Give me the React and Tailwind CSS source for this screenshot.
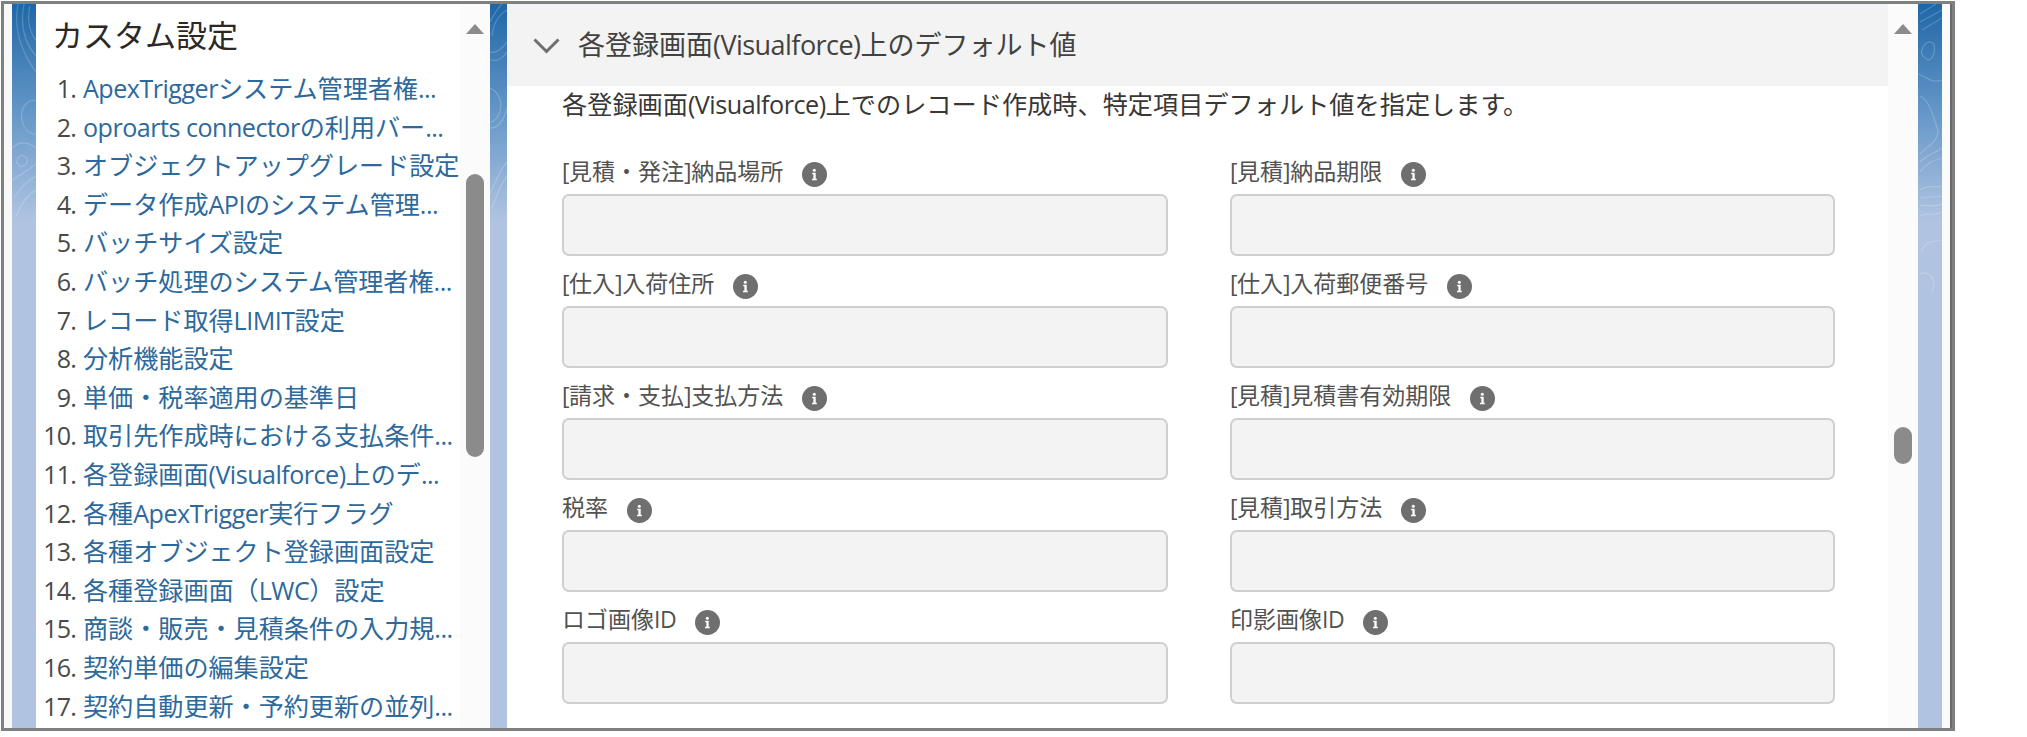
import React from 'react';

const menuItems = [
  'ApexTriggerシステム管理者権...',
  'oproarts connectorの利用バー...',
  'オブジェクトアップグレード設定',
  'データ作成APIのシステム管理...',
  'バッチサイズ設定',
  'バッチ処理のシステム管理者権...',
  'レコード取得LIMIT設定',
  '分析機能設定',
  '単価・税率適用の基準日',
  '取引先作成時における支払条件...',
  '各登録画面(Visualforce)上のデ...',
  '各種ApexTrigger実行フラグ',
  '各種オブジェクト登録画面設定',
  '各種登録画面（LWC）設定',
  '商談・販売・見積条件の入力規...',
  '契約単価の編集設定',
  '契約自動更新・予約更新の並列...',
];

const fields = [
  '[見積・発注]納品場所',
  '[見積]納品期限',
  '[仕入]入荷住所',
  '[仕入]入荷郵便番号',
  '[請求・支払]支払方法',
  '[見積]見積書有効期限',
  '税率',
  '[見積]取引方法',
  'ロゴ画像ID',
  '印影画像ID',
];

// Latin runs are set a little tighter than the Japanese around them
const MixedText = ({ children }) =>
  children.split(/([\x20-\x7e]+)/).map((part, i) =>
    i % 2 === 1 ? (
      <span key={i} className="tracking-[-0.02em]">{part}</span>
    ) : (
      part
    )
  );

const Contours = ({ className, paths }) => (
  <div className={`shrink-0 h-full bg-linear-to-b from-[#1c67a7] from-0% via-[#5f94c6] via-14% to-[#b0c4e1] to-30% ${className}`}>
    <svg width="24" height="320" viewBox="0 0 24 320" fill="none" stroke="#fff" strokeOpacity="0.2" strokeWidth="1.2">
      {paths.map((d) => (
        <path key={d} d={d} />
      ))}
    </svg>
  </div>
);

const ScrollArrow = () => (
  <svg width="18" height="10" viewBox="0 0 18 10" className="mt-5 shrink-0">
    <path d="M9 0L18 10H0Z" fill="#8b8b8b" />
  </svg>
);

const InfoIcon = () => (
  <svg width="25" height="25" viewBox="0 0 25 25" className="shrink-0">
    <circle cx="12.5" cy="12.5" r="12.5" fill="#6f6f6f" />
    <circle cx="12.3" cy="8.2" r="1.5" fill="#fff" />
    <path d="M10.2 10.8h3.5v6h1.1v1.5H10v-1.5h1.4v-4.5h-1.2z" fill="#fff" />
  </svg>
);

const Sidebar = () => (
  <aside className="w-[454px] h-full shrink-0 flex bg-white rounded-t-md overflow-hidden">
    <div className="w-[424px] shrink-0">
      <h2 className="pl-[16px] pt-[9px] h-[65px] text-[31px] leading-[44px] text-[#2b2826]">カスタム設定</h2>
      <ol className="text-[25.1px] leading-[38.6px]">
        {menuItems.map((item, i) => (
          <li key={item} className="flex whitespace-nowrap">
            <span className="w-[40px] mr-[7px] text-right text-[#4a4a48] tracking-[-0.035em]">{i + 1}.</span>
            <a className="text-[#2d699c]">
              <MixedText>{item}</MixedText>
            </a>
          </li>
        ))}
      </ol>
    </div>
    <div className="w-[30px] shrink-0 flex flex-col items-center bg-[#fbfbfb]">
      <ScrollArrow />
      <div className="mt-[140px] w-[18px] h-[283px] rounded-full bg-[#8b8b8b]" />
    </div>
  </aside>
);

const Field = ({ label }) => (
  <div className="h-[112px]">
    <div className="flex items-center h-[50px] pt-[3px] gap-[18px]">
      <label className="text-[23px] leading-[34px] text-[#525250] whitespace-nowrap">
        <MixedText>{label}</MixedText>
      </label>
      <div className="pt-[7px] pl-px">
        <InfoIcon />
      </div>
    </div>
    <div className="h-[62px] rounded-[7px] border-2 border-[#cfcfcf] bg-[#f3f3f3]" />
  </div>
);

const MainPanel = () => (
  <main className="w-[1411px] h-full shrink-0 flex bg-white rounded-t-md overflow-hidden">
    <div className="w-[1381px] shrink-0">
      <header className="flex items-center h-[82px] pl-[26px] bg-[#f3f3f3] border-t-2 border-[#edf3f9]">
        <svg width="27" height="16" viewBox="0 0 27 16" fill="none" stroke="#706e6b" strokeWidth="3">
          <path d="M1.5 1.5L13.5 13.5L25.5 1.5" />
        </svg>
        <h3 className="ml-[18px] pb-0.5 text-[27px] leading-[40px] text-[#42413f] whitespace-nowrap">
          <MixedText>各登録画面(Visualforce)上のデフォルト値</MixedText>
        </h3>
      </header>
      <div className="h-[58px] pl-[55px] text-[25.2px] leading-[36px] text-[#383736] whitespace-nowrap">
        <MixedText>各登録画面(Visualforce)上でのレコード作成時、特定項目デフォルト値を指定します。</MixedText>
      </div>
      <div className="grid grid-cols-[606px_605px] gap-x-[62px] pl-[55px]">
        {fields.map((label) => (
          <Field key={label} label={label} />
        ))}
      </div>
    </div>
    <div className="w-[30px] shrink-0 flex flex-col items-center bg-[#fbfbfb]">
      <ScrollArrow />
      <div className="mt-[393px] w-[18px] h-[37px] rounded-full bg-[#8b8b8b]" />
    </div>
  </main>
);

export default function App() {
  return (
    <div
      className="w-[2027px] h-[737px] pt-px pl-px bg-white overflow-hidden font-['Open_Sans','Noto_Sans_CJK_JP',sans-serif]"
      lang="ja"
    >
      <div className="flex w-[1954px] h-[730px] border-[3px] border-[#7f817f] overflow-hidden">
        <div className="w-2 shrink-0 bg-[#f8f8f8]" />
        <Contours
          className="w-6"
          paths={[
            'M6 0C2 22 8 46 24 68',
            'M12 0C8 20 12 38 24 52',
            'M18 2C15 14 17 28 24 36',
            'M24 96C12 96 8 108 10 116C12 126 18 130 24 130',
            'M0 144C8 136 16 138 24 144',
            'M5 156C8 148 16 152 15 158C13 164 4 164 5 156',
            'M0 176C8 172 16 166 24 160',
            'M2 194C8 184 16 176 24 172',
            'M4 212C10 198 16 190 24 186',
          ]}
        />
        <Sidebar />
        <Contours
          className="w-[17px]"
          paths={[
            'M0 18C4 10 8 4 12 0',
            'M2 32C4 16 10 10 17 6',
            'M0 48C6 50 13 44 17 38',
            'M0 56C8 58 13 54 17 48',
            'M0 84C10 88 14 102 8 112C6 116 2 118 0 118',
            'M0 124C8 124 14 116 17 104',
            'M0 190C6 176 12 164 17 158',
            'M2 204C8 188 12 178 17 172',
          ]}
        />
        <MainPanel />
        <Contours
          className="w-6"
          paths={[
            'M2 10L18 0',
            'M2 18L24 6',
            'M4 26L24 14',
            'M4 46C6 38 12 36 16 40C18 48 14 56 10 56C6 54 2 50 4 46',
            'M0 70C8 72 12 80 24 76',
            'M2 92C12 96 16 116 20 126C20 138 10 142 2 150',
            'M2 158C10 150 16 150 24 144',
            'M2 168C10 158 16 156 24 154',
            'M2 186C10 180 16 184 24 182',
            'M2 194C10 192 16 194 24 192',
            'M2 202C10 200 16 204 24 200',
            'M2 212C10 208 16 212 24 208',
            'M4 246C8 236 16 238 24 236',
            'M2 270C10 266 20 274 14 288',
          ]}
        />
        <div className="w-2 shrink-0 bg-[#fafafb]" />
        <div className="w-0.5 shrink-0 bg-[#6a6a6a]" />
      </div>
    </div>
  );
}
